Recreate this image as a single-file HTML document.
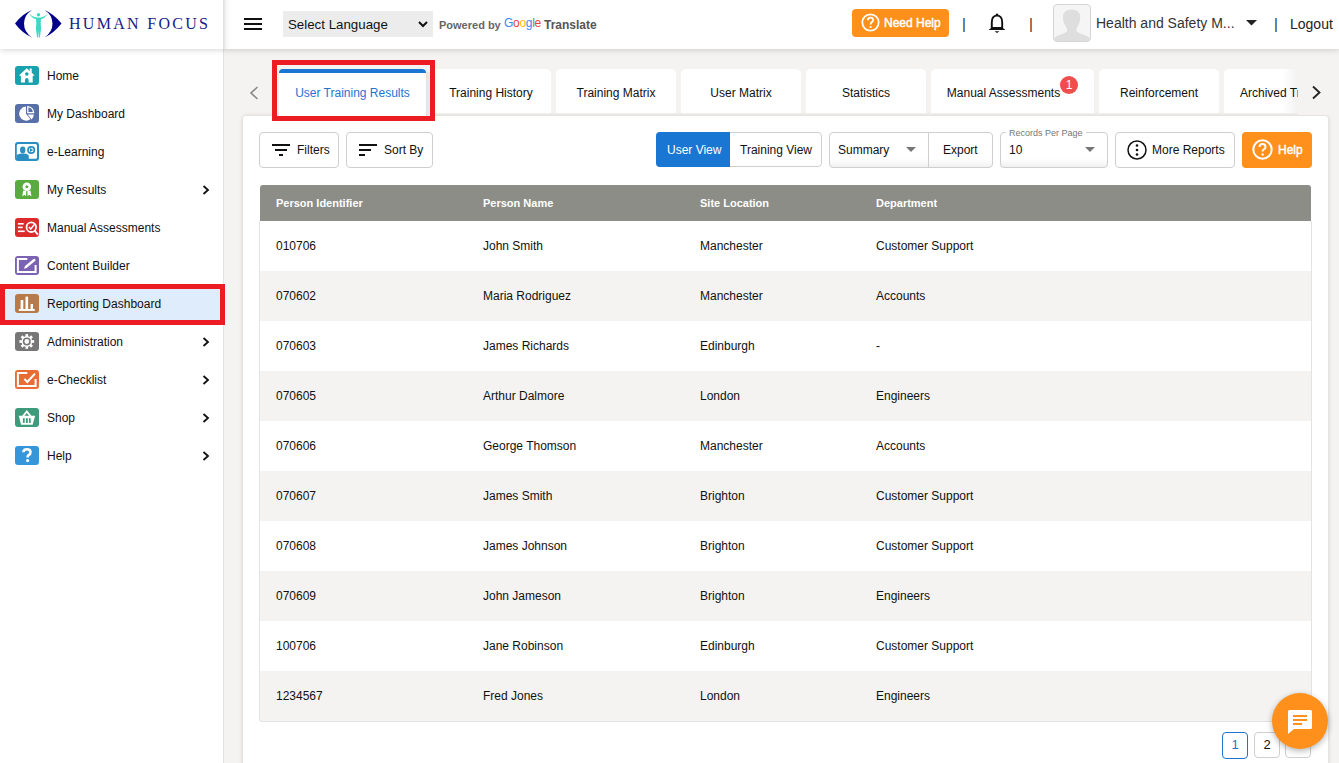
<!DOCTYPE html>
<html><head><meta charset="utf-8">
<style>
*{box-sizing:border-box;margin:0;padding:0}
html,body{width:1339px;height:763px;overflow:hidden;background:#f4f3f1;font-family:"Liberation Sans",sans-serif;color:#111}
.abs{position:absolute}
#sidebar{position:absolute;left:0;top:0;width:224px;height:763px;background:#fff;border-right:1px solid #e2e2e2}
#hdr{position:absolute;left:0;top:0;width:1339px;height:49px;background:#fff;box-shadow:0 1px 6px rgba(0,0,0,.17)}
.logo{position:absolute;left:0;top:0;width:224px;height:49px}
.logotext{position:absolute;left:69px;top:15.3px;font-family:"Liberation Serif",serif;font-size:16px;line-height:18px;letter-spacing:2.3px;color:#1a1a88;white-space:nowrap}
.nav{position:absolute;left:0;width:223px;height:38px}
.nav .ic{position:absolute;left:15px;top:9.5px;width:24px;height:19px;border-radius:3px}
.nav .ic svg{position:absolute;left:0;top:0}
.nav .t{position:absolute;left:47px;top:12px;font-size:12px;color:#111;line-height:15px;white-space:nowrap}
.nav .chev{position:absolute;left:202px;top:14.5px}
.tab{position:absolute;top:69px;height:44px;background:#fff;border-radius:5px 5px 0 0;font-size:12px;text-align:center;line-height:16px;padding-top:16px;color:#111;white-space:nowrap;overflow:hidden}
.btn{position:absolute;top:132px;height:36px;border:1px solid #cfcfcf;border-radius:4px;background:#fff;font-size:12px;line-height:34px;color:#111}
.row{position:absolute;left:259px;width:1053px;height:50px;font-size:12px;line-height:50px;border-left:1px solid #e3e3e3;border-right:1px solid #e3e3e3}
.row span{position:absolute;top:0}
.odd{background:#fff}
.even{background:#f4f3f1}
</style></head><body>

<!-- main card -->
<div class="abs" style="left:243px;top:116px;width:1085px;height:660px;background:#fff;border-radius:3px;box-shadow:0 0 4px rgba(0,0,0,.16)"></div>

<div id="sidebar"></div>
<div id="hdr">
  <div class="logo">
    <svg class="abs" style="left:14px;top:9px" width="49" height="30" viewBox="0 0 49 30">
      <path d="M1 14.5 Q8 5 18 1 Q10 6 10 14.5 Q10 23 18 28.5 Q8 24 1 14.5Z" fill="#00008b"/>
      <path d="M47.5 14.5 Q40 5 30.5 1 Q38.5 6 38.5 14.5 Q38.5 23 30.5 28.5 Q40 24 47.5 14.5Z" fill="#00008b"/>
      <circle cx="24.5" cy="5.7" r="1.7" fill="#3fd8c4"/><path d="M14.7 4.2 Q18.5 8 22 8.5 L27 8.5 Q30.5 8 34.3 4.2 Q31 9 27 10.3 Q26.5 14 26.9 17 Q27.4 20 26.6 23 L25.9 28.6 L24.9 28.6 L24.5 21.5 L24.1 28.6 L23.1 28.6 L22.4 23 Q21.6 20 22.1 17 Q22.5 14 22 10.3 Q18 9 14.7 4.2Z" fill="#3fd8c4"/></svg>
    <div class="logotext">HUMAN FOCUS</div>
  </div>
  <div class="abs" style="left:223px;top:0;width:9px;height:49px;background:linear-gradient(90deg,rgba(0,0,0,.13),rgba(0,0,0,.03) 40%,rgba(0,0,0,0))"></div>
  <!-- hamburger -->
  <div class="abs" style="left:244px;top:18px;width:18px;height:2px;background:#111"></div>
  <div class="abs" style="left:244px;top:23px;width:18px;height:2px;background:#111"></div>
  <div class="abs" style="left:244px;top:28px;width:18px;height:2px;background:#111"></div>
  <!-- select -->
  <div class="abs" style="left:283px;top:11px;width:150px;height:26px;background:#ececec"></div>
  <div class="abs" style="left:288px;top:16px;font-size:13.3px;line-height:18px;color:#111">Select Language</div>
  <svg class="abs" style="left:418px;top:21px" width="10" height="7" viewBox="0 0 10 7"><path d="M1 1 L5 5 L9 1" stroke="#111" stroke-width="2" fill="none"/></svg>
  <div class="abs" style="left:439px;top:18px;font-size:11px;line-height:14px;color:#666;font-weight:bold">Powered by</div>
  <div class="abs" style="left:504px;top:16px;font-size:12px;line-height:14px;letter-spacing:-0.3px"><span style="color:#4285f4">G</span><span style="color:#ea4335">o</span><span style="color:#fbbc05">o</span><span style="color:#4285f4">g</span><span style="color:#34a853">l</span><span style="color:#ea4335">e</span></div>
  <div class="abs" style="left:544px;top:17px;font-size:12px;line-height:16px;color:#555;font-weight:bold">Translate</div>

  <!-- need help -->
  <div class="abs" style="left:852px;top:9px;width:97px;height:27.5px;background:#fe901b;border-radius:4px"></div>
  <svg class="abs" style="left:861px;top:13px" width="19" height="19" viewBox="0 0 19 19"><circle cx="9.5" cy="9.5" r="8.2" stroke="#fff" stroke-width="1.8" fill="none"/><path d="M6.8 7.3 Q6.8 4.6 9.5 4.6 Q12.2 4.6 12.2 7.1 Q12.2 8.6 10.6 9.4 Q9.6 9.9 9.6 11.4" stroke="#fff" stroke-width="1.8" fill="none"/><circle cx="9.6" cy="14" r="1.1" fill="#fff"/></svg>
  <div class="abs" style="left:884px;top:14.5px;font-size:12px;line-height:16px;color:#fff;-webkit-text-stroke:0.45px #fff">Need Help</div>
  <div class="abs" style="left:962px;top:15px;font-size:15px;line-height:18px;color:#333">|</div>
  <svg class="abs" style="left:988px;top:12px" width="18" height="22" viewBox="0 0 18 22"><circle cx="9" cy="2.6" r="1.2" fill="#111"/><path d="M3.8 16 L3.8 10.5 Q3.8 3.6 9 3.6 Q14.2 3.6 14.2 10.5 L14.2 16" fill="none" stroke="#111" stroke-width="1.9"/><path d="M1.2 17.2 Q3.2 16.6 3.8 15 L14.2 15 Q14.8 16.6 16.8 17.2 L16.8 18 L1.2 18Z" fill="#111"/><path d="M6.6 19.2 L11.4 19.2 L9 21Z" fill="#111"/></svg>
  <div class="abs" style="left:1029px;top:15px;font-size:15px;line-height:18px;color:#333">|</div>
  <div class="abs" style="left:1053px;top:4px;width:38px;height:38px;background:#f5f5f5;border:1px solid #d6d6d6;border-radius:4px;overflow:hidden">
    <svg width="36" height="36" viewBox="0 0 36 36"><path d="M9 12 Q9 4.5 17.6 4.5 Q26.2 4.5 26.2 12 Q26.2 18 23 22.5 L22.2 25.5 Q23 27.8 30 29.8 Q34.5 31.3 36 33.5 L36 36 L0 36 L0 33.5 Q1.5 31.3 6 29.8 Q12.5 27.8 13.2 25.5 L12.4 22.5 Q9 18 9 12Z" fill="#dedede"/></svg>
  </div>
  <div class="abs" style="left:1096px;top:14px;font-size:14px;line-height:18px;color:#333">Health and Safety M...</div>
  <svg class="abs" style="left:1246px;top:20px" width="11" height="6" viewBox="0 0 11 6"><path d="M0 0 L11 0 L5.5 5.5Z" fill="#222"/></svg>
  <div class="abs" style="left:1274px;top:15px;font-size:15px;line-height:18px;color:#333">|</div>
  <div class="abs" style="left:1290px;top:15px;font-size:14px;line-height:18px;color:#222">Logout</div>
</div>

<!-- sidebar nav -->
<div class="nav" style="top:56.5px"><div class="ic" style="background:#17a2ae"><svg width="24" height="19" viewBox="0 0 24 19"><path d="M3.9 9.4 L11.8 2.3 L14.7 4.9 L14.7 2.5 L16.7 2.5 L16.7 6.7 L19.7 9.4 L17.7 9.8 L17.7 16.4 L13.6 16.4 L13.6 13.9 Q13.6 12.1 11.8 12.1 Q10 12.1 10 13.9 L10 16.4 L5.9 16.4 L5.9 9.8 Z" fill="#fff"/><circle cx="11.8" cy="8" r="1.8" fill="#17a2ae"/></svg></div><div class="t">Home</div></div>
<div class="nav" style="top:94.5px"><div class="ic" style="background:#5870a8"><svg width="24" height="19" viewBox="0 0 24 19"><path d="M11 2.6 L11 9.8 L15.4 15.2 A7 7 0 1 1 11 2.6Z" fill="#fff"/><path d="M12.8 2.6 A6.4 6.4 0 0 1 18.6 8.6 L12.8 8.6Z" fill="none" stroke="#fff" stroke-width="1.3"/><path d="M12.6 10.4 L18.8 10.4 A7 7 0 0 1 16.6 15.6Z" fill="#fff"/></svg></div><div class="t">My Dashboard</div></div>
<div class="nav" style="top:132.5px"><div class="ic" style="background:#2a8ec3"><svg width="24" height="19" viewBox="0 0 24 19"><rect x="1.8" y="2" width="20.2" height="14.8" rx="1.5" fill="#fff"/><ellipse cx="7.7" cy="7.9" rx="2.7" ry="3.4" fill="#2a8ec3"/><path d="M1.8 12.8 Q5 11.6 7.7 11.6 Q11.2 11.6 12.8 12.6 Q13.8 13.3 13.8 14.6 L13.8 17 L1.8 17Z" fill="#2a8ec3"/><circle cx="16.2" cy="8" r="3.2" fill="none" stroke="#2a8ec3" stroke-width="1.7"/><path d="M15 5.9 L18.3 8 L15 10.1Z" fill="#2a8ec3"/></svg></div><div class="t">e-Learning</div></div>
<div class="nav" style="top:170.5px"><div class="ic" style="background:#5aab3f"><svg width="24" height="19" viewBox="0 0 24 19"><path d="M8.2 10.6 L11.2 10.9 L11 16.2 L9.6 14.8 L7.2 16.2Z M15.4 10.6 L12.4 10.9 L12.6 16.2 L14 14.8 L16.4 16.2Z" fill="#fff"/><circle cx="11.8" cy="6.8" r="4.3" fill="#fff"/><path d="M11.8 4.6 L12.45 6 L13.9 6.1 L12.8 7.1 L13.1 8.6 L11.8 7.8 L10.5 8.6 L10.8 7.1 L9.7 6.1 L11.15 6Z" fill="#5aab3f"/></svg></div><div class="t">My Results</div><svg class="chev" width="8" height="10" viewBox="0 0 8 10"><path d="M1.5 1 L6 5 L1.5 9" fill="none" stroke="#111" stroke-width="1.8"/></svg></div>
<div class="nav" style="top:208.5px"><div class="ic" style="background:#dd2a2b"><svg width="24" height="19" viewBox="0 0 24 19"><rect x="2.9" y="5" width="5.8" height="1.6" fill="#fff"/><rect x="2.9" y="8.6" width="4.8" height="1.6" fill="#fff"/><rect x="2.9" y="12.5" width="6.8" height="1.6" fill="#fff"/><circle cx="16.3" cy="9.2" r="4.8" fill="none" stroke="#fff" stroke-width="1.8"/><path d="M13.9 9.1 L15.7 11 L19.8 6" fill="none" stroke="#fff" stroke-width="1.5"/><path d="M19.6 12.6 L23 16.6" stroke="#fff" stroke-width="1.9"/></svg></div><div class="t">Manual Assessments</div></div>
<div class="nav" style="top:246.5px"><div class="ic" style="background:#7b62b3"><svg width="24" height="19" viewBox="0 0 24 19"><path d="M12.3 3.1 L2.9 3.1 L2.9 15.9 L20.6 15.9 L20.6 9" fill="none" stroke="#fff" stroke-width="2"/><path d="M9 12.8 L10 10 L18.5 3 Q19.5 2.6 20.4 3.4 Q20.8 4.4 20 5 L11.6 12Z" fill="#fff"/></svg></div><div class="t">Content Builder</div></div>
<div class="nav" style="top:284.5px;background:#dfecfb"><div class="ic" style="background:#b87a49"><svg width="24" height="19" viewBox="0 0 24 19"><rect x="5.6" y="6" width="2.7" height="9.5" fill="#fff"/><rect x="10.5" y="2.6" width="2.6" height="12.9" fill="#fff"/><rect x="15.6" y="10" width="2.4" height="5.5" fill="#fff"/><rect x="3.8" y="15" width="16" height="1.9" fill="#fff"/></svg></div><div class="t">Reporting Dashboard</div></div>
<div class="nav" style="top:322.5px"><div class="ic" style="background:#777777"><svg width="24" height="19" viewBox="0 0 24 19"><g fill="#fff"><circle cx="11.8" cy="9.5" r="5.4"/><rect x="10.5" y="2.1" width="2.6" height="3" transform="rotate(0 11.8 9.5)"/><rect x="10.5" y="2.1" width="2.6" height="3" transform="rotate(45 11.8 9.5)"/><rect x="10.5" y="2.1" width="2.6" height="3" transform="rotate(90 11.8 9.5)"/><rect x="10.5" y="2.1" width="2.6" height="3" transform="rotate(135 11.8 9.5)"/><rect x="10.5" y="2.1" width="2.6" height="3" transform="rotate(180 11.8 9.5)"/><rect x="10.5" y="2.1" width="2.6" height="3" transform="rotate(225 11.8 9.5)"/><rect x="10.5" y="2.1" width="2.6" height="3" transform="rotate(270 11.8 9.5)"/><rect x="10.5" y="2.1" width="2.6" height="3" transform="rotate(315 11.8 9.5)"/></g><circle cx="11.8" cy="9.5" r="3.2" fill="none" stroke="#777" stroke-width="1.6"/></svg></div><div class="t">Administration</div><svg class="chev" width="8" height="10" viewBox="0 0 8 10"><path d="M1.5 1 L6 5 L1.5 9" fill="none" stroke="#111" stroke-width="1.8"/></svg></div>
<div class="nav" style="top:360.5px"><div class="ic" style="background:#e86d35"><svg width="24" height="19" viewBox="0 0 24 19"><path d="M12.3 3.1 L2.9 3.1 L2.9 15.9 L20.6 15.9 L20.6 9" fill="none" stroke="#fff" stroke-width="2"/><path d="M9.4 8.8 L12.3 12 L20 3.6" fill="none" stroke="#fff" stroke-width="2"/></svg></div><div class="t">e-Checklist</div><svg class="chev" width="8" height="10" viewBox="0 0 8 10"><path d="M1.5 1 L6 5 L1.5 9" fill="none" stroke="#111" stroke-width="1.8"/></svg></div>
<div class="nav" style="top:398.5px"><div class="ic" style="background:#3d9a7b"><svg width="24" height="19" viewBox="0 0 24 19"><path d="M11.8 2.1 L16.6 8 L14.3 8 L11.8 4.9 L9.3 8 L7 8Z" fill="#fff"/><path d="M3.8 7.7 L20.1 7.7 L17.6 16.7 L6.1 16.7Z" fill="#fff"/><rect x="7.9" y="10.2" width="1.8" height="4.7" fill="#3d9a7b"/><rect x="10.9" y="10.2" width="1.9" height="4.7" fill="#3d9a7b"/><rect x="13.9" y="10.2" width="1.8" height="4.7" fill="#3d9a7b"/></svg></div><div class="t">Shop</div><svg class="chev" width="8" height="10" viewBox="0 0 8 10"><path d="M1.5 1 L6 5 L1.5 9" fill="none" stroke="#111" stroke-width="1.8"/></svg></div>
<div class="nav" style="top:436.5px"><div class="ic" style="background:#3596db"><svg width="24" height="19" viewBox="0 0 24 19"><path d="M8.4 6.2 Q8.4 3.2 11.9 3.2 Q15.5 3.2 15.5 6.3 Q15.5 8.2 13.6 9.2 Q12.6 9.8 12.6 11.6" fill="none" stroke="#fff" stroke-width="2.6"/><circle cx="12.6" cy="14.6" r="1.6" fill="#fff"/></svg></div><div class="t">Help</div><svg class="chev" width="8" height="10" viewBox="0 0 8 10"><path d="M1.5 1 L6 5 L1.5 9" fill="none" stroke="#111" stroke-width="1.8"/></svg></div>
<div class="abs" style="left:0;top:284px;width:225px;height:41px;border:5px solid #ec1c24"></div>

<!-- tabs -->
<svg class="abs" style="left:249px;top:86px" width="10" height="14" viewBox="0 0 10 14"><path d="M8.5 1 L2 7 L8.5 13" stroke="#888" stroke-width="1.6" fill="none"/></svg>
<div class="abs" style="left:426px;top:72px;width:4px;height:44px;background:linear-gradient(90deg,#e2e1df,#eeedeb)"></div><div class="tab" style="left:279px;width:147px;height:47px;color:#1f73d1;padding-top:15.5px;border-radius:5px 5px 0 0">User Training Results</div><div class="abs" style="left:279px;top:69px;width:147px;height:4px;background:#1976d2;border-radius:4px 4px 0 0"></div>
<div class="tab" style="left:431px;width:120px">Training History</div>
<div class="tab" style="left:556px;width:120px">Training Matrix</div>
<div class="tab" style="left:681px;width:120px">User Matrix</div>
<div class="tab" style="left:806px;width:120px">Statistics</div>
<div class="tab" style="left:931px;width:163px;padding-right:18px">Manual Assessments</div>
<div class="abs" style="left:1060px;top:76px;width:18px;height:18px;border-radius:9px;background:#ee4e4c;color:#fff;font-size:12px;line-height:18px;text-align:center">1</div>
<div class="tab" style="left:1099px;width:120px">Reinforcement</div>
<div class="tab" style="left:1224px;width:120px;text-align:left;padding-left:16px">Archived Training</div>
<div class="abs" style="left:1282px;top:69px;width:16px;height:44px;background:linear-gradient(90deg,rgba(0,0,0,0),rgba(0,0,0,.05))"></div><div class="abs" style="left:1298px;top:60px;width:41px;height:55px;background:#f4f3f1"></div>
<svg class="abs" style="left:1311px;top:85px" width="11" height="15" viewBox="0 0 11 15"><path d="M2 1.5 L8.5 7.5 L2 13.5" stroke="#222" stroke-width="1.8" fill="none"/></svg>
<div class="abs" style="left:272px;top:60px;width:163px;height:61px;border:5px solid #ec1c24"></div>

<!-- toolbar -->
<div class="btn" style="left:259px;width:80px"></div>
<div class="abs" style="left:272px;top:144px;width:18px;height:2px;background:#111"></div>
<div class="abs" style="left:275px;top:149px;width:12px;height:2px;background:#111"></div>
<div class="abs" style="left:279px;top:154px;width:4px;height:2px;background:#111"></div>
<div class="abs" style="left:297px;top:142px;font-size:12px;line-height:16px">Filters</div>
<div class="btn" style="left:346px;width:87px"></div>
<div class="abs" style="left:359px;top:144px;width:18px;height:2px;background:#111"></div>
<div class="abs" style="left:359px;top:149px;width:12px;height:2px;background:#111"></div>
<div class="abs" style="left:359px;top:154px;width:6px;height:2px;background:#111"></div>
<div class="abs" style="left:384px;top:142px;font-size:12px;line-height:16px">Sort By</div>

<div class="abs" style="left:656px;top:132px;width:166px;height:35px;border:1px solid #cfcfcf;border-radius:4px;background:#fff"></div>
<div class="abs" style="left:656px;top:132px;width:74px;height:35px;background:#1976d2;border-radius:4px 0 0 4px"></div>
<div class="abs" style="left:667px;top:142px;font-size:12px;line-height:16px;color:#fff">User View</div>
<div class="abs" style="left:740px;top:142px;font-size:12px;line-height:16px">Training View</div>

<div class="abs" style="left:829px;top:132px;width:164px;height:36px;border:1px solid #cfcfcf;border-radius:4px;background:linear-gradient(#fff 75%,#f1f1f1)"></div>
<div class="abs" style="left:928px;top:132px;width:1px;height:36px;background:#cfcfcf"></div>
<div class="abs" style="left:838px;top:142px;font-size:12px;line-height:16px">Summary</div>
<svg class="abs" style="left:906px;top:147px" width="10" height="5" viewBox="0 0 10 5"><path d="M0 0 L10 0 L5 5Z" fill="#777"/></svg>
<div class="abs" style="left:943px;top:142px;font-size:12px;line-height:16px">Export</div>

<div class="abs" style="left:1000px;top:132px;width:108px;height:36px;border:1px solid #cfcfcf;border-radius:4px;background:linear-gradient(#fff 75%,#f1f1f1)"></div>
<div class="abs" style="left:1006px;top:127.5px;padding:0 3px;background:#fff;font-size:9px;line-height:11px;color:#777">Records Per Page</div>
<div class="abs" style="left:1009px;top:142px;font-size:12px;line-height:16px">10</div>
<svg class="abs" style="left:1085px;top:147px" width="10" height="5" viewBox="0 0 10 5"><path d="M0 0 L10 0 L5 5Z" fill="#777"/></svg>

<div class="btn" style="left:1115px;width:120px"></div>
<svg class="abs" style="left:1127px;top:140px" width="20" height="20" viewBox="0 0 20 20"><circle cx="10" cy="10" r="9" stroke="#111" stroke-width="1.5" fill="none"/><circle cx="10" cy="5.5" r="1.3" fill="#111"/><circle cx="10" cy="10" r="1.3" fill="#111"/><circle cx="10" cy="14.5" r="1.3" fill="#111"/></svg>
<div class="abs" style="left:1152px;top:142px;font-size:12px;line-height:16px">More Reports</div>

<div class="abs" style="left:1242px;top:132px;width:70px;height:36px;background:#fe901b;border-radius:4px"></div>
<svg class="abs" style="left:1252px;top:139px" width="21" height="21" viewBox="0 0 21 21"><circle cx="10.5" cy="10.5" r="9.2" stroke="#fff" stroke-width="2" fill="none"/><path d="M7.5 8.1 Q7.5 5 10.5 5 Q13.5 5 13.5 7.9 Q13.5 9.6 11.7 10.4 Q10.6 10.9 10.6 12.6" stroke="#fff" stroke-width="2" fill="none"/><circle cx="10.6" cy="15.5" r="1.2" fill="#fff"/></svg>
<div class="abs" style="left:1278px;top:141.5px;font-size:12px;line-height:16px;color:#fff;-webkit-text-stroke:0.45px #fff">Help</div>

<!-- table -->
<div class="abs" style="left:260px;top:185px;width:1051px;height:36px;background:#8c8d87;border-radius:3px 3px 0 0;color:#fff;font-size:11px;font-weight:bold;line-height:36px">
  <span class="abs" style="left:16px">Person Identifier</span>
  <span class="abs" style="left:223px">Person Name</span>
  <span class="abs" style="left:440px">Site Location</span>
  <span class="abs" style="left:616px">Department</span>
</div>
<div class="row odd" style="top:221px"><span style="left:16px">010706</span><span style="left:223px">John Smith</span><span style="left:440px">Manchester</span><span style="left:616px">Customer Support</span></div>
<div class="row even" style="top:271px"><span style="left:16px">070602</span><span style="left:223px">Maria Rodriguez</span><span style="left:440px">Manchester</span><span style="left:616px">Accounts</span></div>
<div class="row odd" style="top:321px"><span style="left:16px">070603</span><span style="left:223px">James Richards</span><span style="left:440px">Edinburgh</span><span style="left:616px">-</span></div>
<div class="row even" style="top:371px"><span style="left:16px">070605</span><span style="left:223px">Arthur Dalmore</span><span style="left:440px">London</span><span style="left:616px">Engineers</span></div>
<div class="row odd" style="top:421px"><span style="left:16px">070606</span><span style="left:223px">George Thomson</span><span style="left:440px">Manchester</span><span style="left:616px">Accounts</span></div>
<div class="row even" style="top:471px"><span style="left:16px">070607</span><span style="left:223px">James Smith</span><span style="left:440px">Brighton</span><span style="left:616px">Customer Support</span></div>
<div class="row odd" style="top:521px"><span style="left:16px">070608</span><span style="left:223px">James Johnson</span><span style="left:440px">Brighton</span><span style="left:616px">Customer Support</span></div>
<div class="row even" style="top:571px"><span style="left:16px">070609</span><span style="left:223px">John Jameson</span><span style="left:440px">Brighton</span><span style="left:616px">Engineers</span></div>
<div class="row odd" style="top:621px"><span style="left:16px">100706</span><span style="left:223px">Jane Robinson</span><span style="left:440px">Edinburgh</span><span style="left:616px">Customer Support</span></div>
<div class="row even" style="top:671px;height:51px;border-bottom:1px solid #e3e3e3;border-radius:0 0 3px 3px"><span style="left:16px">1234567</span><span style="left:223px">Fred Jones</span><span style="left:440px">London</span><span style="left:616px">Engineers</span></div>

<!-- pagination -->
<div class="abs" style="left:1222px;top:732px;width:26px;height:27px;border:1.5px solid #1f73d1;border-radius:4px;color:#1f73d1;font-size:13px;text-align:center;line-height:24px">1</div>
<div class="abs" style="left:1254px;top:732px;width:26px;height:26px;border:1px solid #cfcfcf;border-radius:4px;color:#111;font-size:13px;text-align:center;line-height:24px">2</div>
<div class="abs" style="left:1285px;top:732px;width:26px;height:26px;border:1px solid #cfcfcf;border-radius:4px"></div>

<!-- chat -->
<div class="abs" style="left:1272px;top:693px;width:56px;height:56px;border-radius:28px;background:#fe901b;box-shadow:0 2px 6px rgba(0,0,0,.3)"></div>
<svg class="abs" style="left:1288px;top:710px" width="24" height="24" viewBox="0 0 24 24"><path d="M1.5 0 L22.5 0 Q24 0 24 1.5 L24 17.5 Q24 19 22.5 19 L6 19 L0 24 L0 1.5 Q0 0 1.5 0Z" fill="#fff"/><rect x="5" y="5" width="14" height="2" fill="#fe901b"/><rect x="5" y="9" width="14" height="2" fill="#fe901b"/><rect x="5" y="13" width="9" height="2" fill="#fe901b"/></svg>

</body></html>
